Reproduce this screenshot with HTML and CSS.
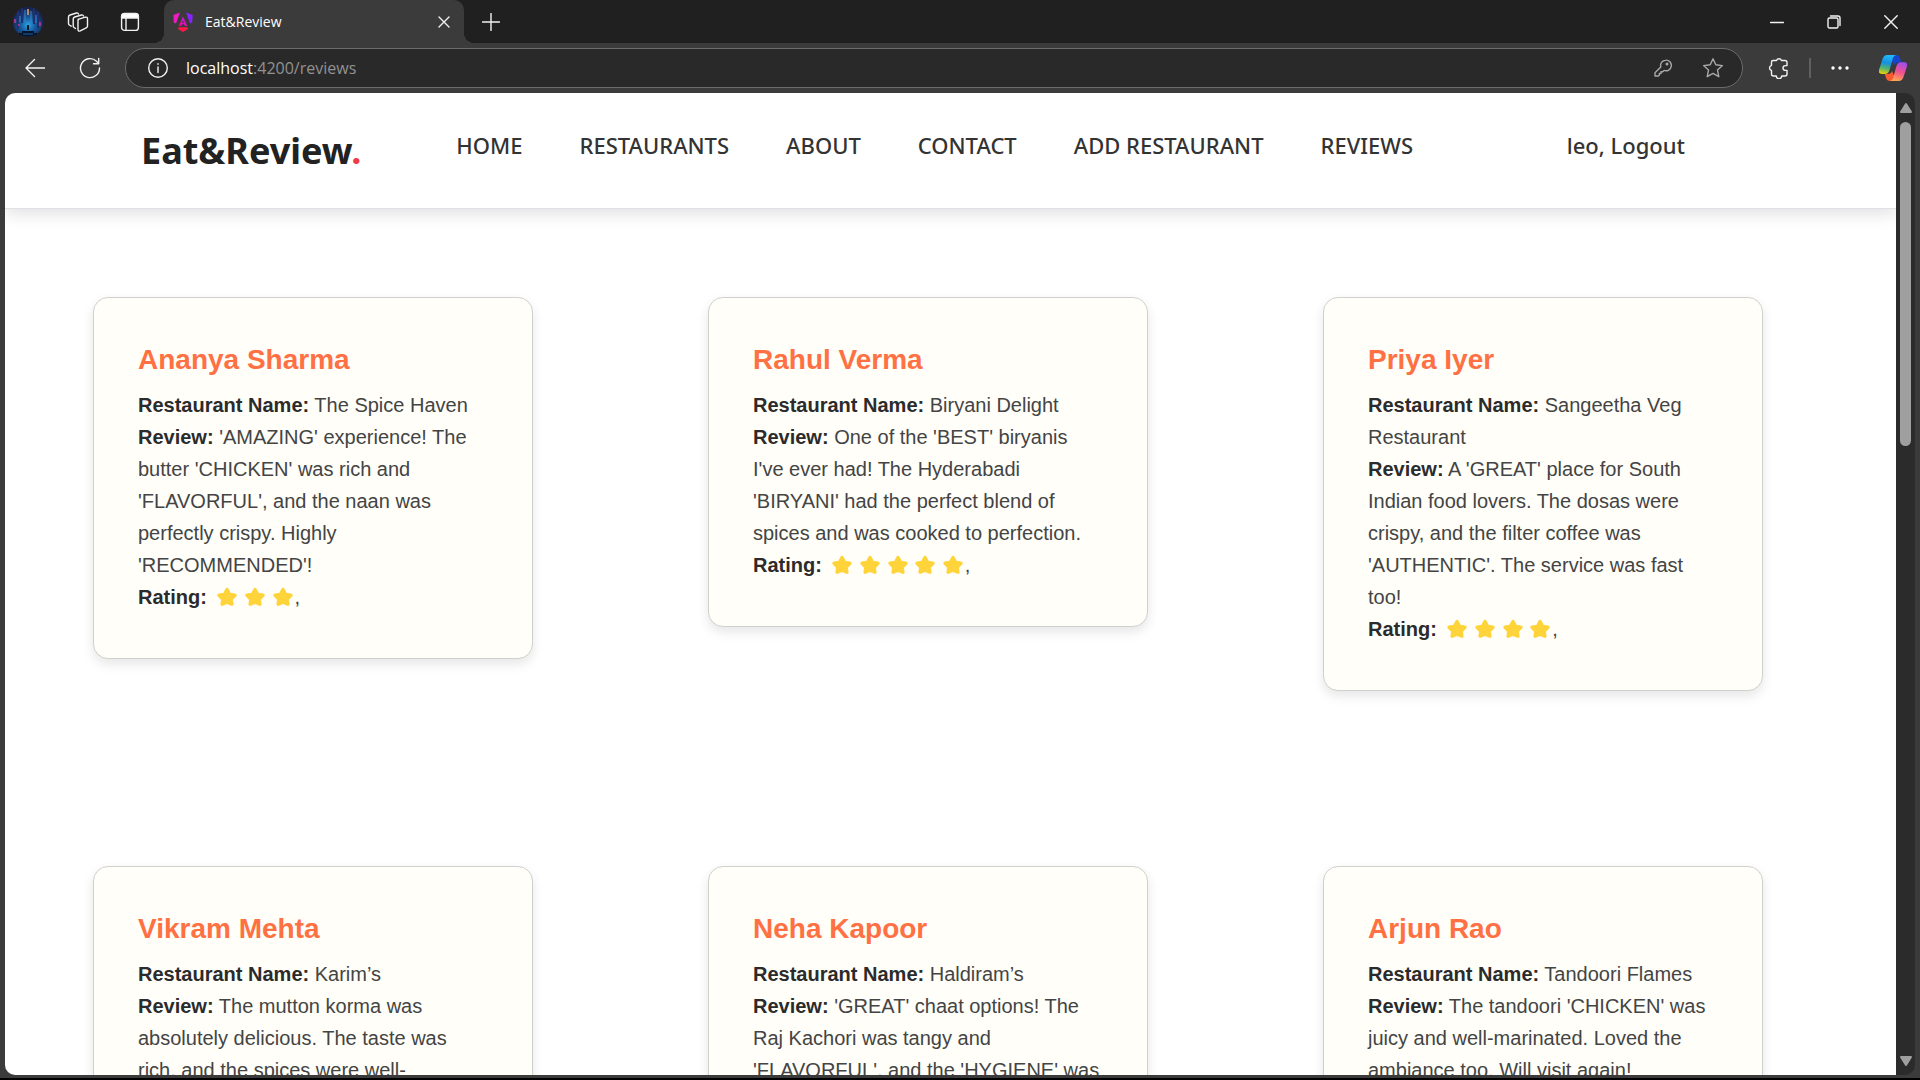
FILE: index.html
```html
<!DOCTYPE html>
<html lang="en">
<head>
<meta charset="utf-8">
<title>Eat&amp;Review</title>
<link rel="stylesheet" href="styles.css">
</head>
<body>
<svg class="defs" width="0" height="0" aria-hidden="true">
  <symbol id="star" viewBox="0 0 22 20"><path d="M11 2.600 13.500 7.400 19 8.300 15.100 12.200 15.900 17.200 11 15.200 6.100 17.200 6.900 12.200 3 8.300 8.500 7.400Z" fill="#ffd43b" stroke="#ffd43b" stroke-width="3.400" stroke-linejoin="round"/></symbol>
</svg>

<div class="tabbar">
  <button class="profile" aria-label="Profile">
    <svg width="30" height="30" viewBox="0 0 30 30">
      <defs>
        <clipPath id="round"><circle cx="15" cy="15" r="15"/></clipPath>
        <radialGradient id="glow" cx=".5" cy=".6" r=".55"><stop offset="0" stop-color="#2ba6e8"/><stop offset=".45" stop-color="#165a9c"/><stop offset="1" stop-color="#182352"/></radialGradient>
      </defs>
      <g clip-path="url(#round)">
        <path fill="url(#glow)" d="M0 0h30v30H0z"/>
        <path d="M5 3v19M9 1v15M21 1v16M25 4v17" stroke="#20306e" stroke-width="2"/>
        <path d="M12 3v12M18 4v12M7 9v6M23 8v8" stroke="#3a86c8"/>
        <path d="M15 2v6" stroke="#b58a6a" stroke-width="2"/>
        <path d="M2 12v4M27 15v4M6 17v2" stroke="#a0378f" stroke-width="2"/>
        <path d="M0 26h9v-2h12v2h9v4H0z" fill="#07122b"/>
        <path d="M14 18h2v5h-2z" fill="#06162f"/>
        <path d="M10 27h10" stroke="#1d63a0"/>
      </g>
    </svg>
  </button>
  <button class="tool" aria-label="Workspaces">
    <svg width="22" height="22" viewBox="0 0 22 22" class="line"><path d="m11 8.300 7.300-2.100q2.200-.5 2.200 1.600V15q0 1.400-1.300 1.900l-6 2.900q-2.200 1-2.200-1.300V9.500q0-.9.8-1.200Z"/><path d="M8.500 17.500 7 16.500q-.8-.5-.8-1.500V8q0-1.500 1.500-2l6.800-2q1.500-.4 2 1"/><path d="M4.200 15.200 2.300 14q-.8-.5-.8-1.500V6q0-1.500 1.500-2l6.500-2q1.500-.4 2 1"/></svg>
  </button>
  <button class="tool" aria-label="Tab actions">
    <svg width="20" height="20" viewBox="0 0 20 20" class="line"><rect x="1.600" y="1.600" width="16.800" height="16.800" rx="3"/><path d="M1.600 6V4.500q0-3 3-3h10.800q3 0 3 3V6Z" fill="#fff"/><path d="M6 6v12"/></svg>
  </button>
  <div class="tab">
    <svg width="20" height="20" viewBox="0 0 20 20">
      <defs><linearGradient id="ng" x1="0" y1="1" x2="1" y2="0"><stop offset="0" stop-color="#f0069b"/><stop offset=".5" stop-color="#e10fc0"/><stop offset="1" stop-color="#a01cff"/></linearGradient></defs>
      <path fill="#f01cc0" d="M7 .5 3 11.500.8 10.500.300 3Z"/><path fill="#8a22ff" d="M13 .5 17 11.500 19.200 10.500 19.700 3Z"/><path fill="url(#ng)" d="m10 4.500 4.200 9.500h-2.400l-.7-1.700H8.900L8.200 14H5.800Zm0 3.800-1 2.500h2Z"/><path fill="#ff1848" d="M5.500 15.200h9l.5 1.800-5 3-5-3Z"/>
    </svg>
    <span class="tab-title">Eat&amp;Review</span>
    <button class="tab-close" aria-label="Close tab"><svg width="12" height="12" viewBox="0 0 12 12" class="line"><path d="m1 1 10 10M11 1 1 11"/></svg></button>
  </div>
  <button class="newtab" aria-label="New tab"><svg width="18" height="18" viewBox="0 0 18 18" class="line"><path d="M9 .5v17M.5 9h17"/></svg></button>
  <div class="window-buttons">
    <button aria-label="Minimize"><svg width="14" height="14" viewBox="0 0 14 14" class="line"><path d="M.5 7.500h13"/></svg></button>
    <button aria-label="Restore"><svg width="14" height="14" viewBox="0 0 14 14" class="line"><rect x="1" y="3" width="10" height="10" rx="1.500"/><path d="M3.500 1h7.500q2 0 2 2v7.500"/></svg></button>
    <button aria-label="Close"><svg width="14" height="14" viewBox="0 0 14 14" class="line"><path d="m.8.8 12.400 12.400M13.200.8.8 13.200"/></svg></button>
  </div>
</div>

<div class="toolbar">
  <button class="nav-button" aria-label="Back"><svg width="20" height="20" viewBox="0 0 20 20" class="line"><path d="M20 10H1M9.500 1.500 1 10l8.500 8.500"/></svg></button>
  <button class="nav-button" aria-label="Refresh"><svg width="22" height="22" viewBox="0 0 22 22" class="line"><path d="M20.500 11A9.500 9.500 0 1 1 17.500 4.200L19.700 6.500M19.700 1.500v5.200h-5.200"/></svg></button>
  <div class="address">
    <button class="info" aria-label="Site information"><svg width="20" height="20" viewBox="0 0 20 20" class="line"><circle cx="10" cy="10" r="9.300"/><path d="M10 9v5.500M10 5.800v.4"/></svg></button>
    <div class="url" role="textbox" aria-label="Address">localhost<span class="url-path">:4200/reviews</span></div>
    <button class="address-button" aria-label="Passwords"><svg width="18" height="18" viewBox="0 0 18 18" class="line"><path d="M11.500 1.200a5.300 5.300 0 1 1-1.400 10.200L8.700 12.800H7v1.700H5.300v1.700l-.9.800H1v-3.300l5.800-5.800A5.300 5.300 0 0 1 11.500 1.200Z"/><circle cx="13" cy="5" r=".8"/></svg></button>
    <button class="address-button" aria-label="Favorite"><svg width="22" height="22" viewBox="0 0 22 22" class="line"><path d="m11 1.800 2.800 6 6.600.8-4.900 4.500 1.300 6.600L11 16.400l-5.800 3.300 1.300-6.600L1.600 8.600l6.600-.8Z"/></svg></button>
  </div>
  <button class="extra" aria-label="Extensions"><svg width="22" height="22" viewBox="0 0 22 22" class="line"><path d="M5 3.500h3.500a2.700 2.700 0 0 1 5 0H17q2 0 2 2V8.600h-1.600a2.400 2.400 0 0 0 0 4.800H19V17q0 2-2 2h-3.300a2.700 2.700 0 0 1-5.400 0H5.500q-2 0-2-2v-3.500a2.700 2.700 0 0 1 0-5.200V5q0-1.500 1.500-1.500Z"/></svg></button>
  <span class="divider"></span>
  <button class="extra" aria-label="Settings"><svg width="18" height="6" viewBox="0 0 18 6" fill="#fff"><circle cx="2" cy="3" r="1.700"/><circle cx="9" cy="3" r="1.700"/><circle cx="16" cy="3" r="1.700"/></svg></button>
  <button class="copilot" aria-label="Copilot">
    <svg width="28" height="26" viewBox="0 0 28 26">
      <defs>
        <linearGradient id="ca" x1=".4" y1="0" x2=".2" y2="1"><stop offset="0" stop-color="#20b8f5"/><stop offset=".4" stop-color="#1590e0"/><stop offset=".7" stop-color="#59b56c"/><stop offset="1" stop-color="#f5d000"/></linearGradient>
        <linearGradient id="cb" x1=".7" y1="0" x2=".4" y2="1"><stop offset="0" stop-color="#a04cf0"/><stop offset=".5" stop-color="#f05090"/><stop offset="1" stop-color="#ffa850"/></linearGradient>
      </defs>
      <path fill="#1545cf" d="M13 0h4q3 0 4 3l1.200 4.500H19q-3 0-4 3L12 3Z"/>
      <path fill="#fa5a30" d="M15 26h-4q-3 0-4-3l-1.200-4H9q3 0 4-3l3 7Z"/>
      <path fill="url(#ca)" d="M8 0h10q-3 0-4 3l-3.500 12q-1 4-4.500 4H3q-4 0-3-4L3.500 4Q5 0 8 0Z"/>
      <path fill="url(#cb)" d="M20 26H10q3 0 4-3l3.500-12q1-3.800 4.500-3.800h3q4 0 3 4L24.500 22Q23 26 20 26Z"/>
    </svg>
  </button>
</div>

<div class="viewport">
  <div class="page">
    <header class="site-header">
      <a class="logo" href="#">Eat&amp;Review<span class="logo-dot">.</span></a>
      <nav class="site-nav">
        <a href="#">HOME</a>
        <a href="#">RESTAURANTS</a>
        <a href="#">ABOUT</a>
        <a href="#">CONTACT</a>
        <a href="#">ADD RESTAURANT</a>
        <a href="#">REVIEWS</a>
      </nav>
      <a class="account" href="#">leo, Logout</a>
    </header>
    <main class="reviews">
      <article class="card">
        <h2>Ananya Sharma</h2>
        <p><b>Restaurant Name:</b> The Spice Haven</p>
        <p><b>Review:</b> 'AMAZING' experience! The butter 'CHICKEN' was rich and 'FLAVORFUL', and the naan was perfectly crispy. Highly 'RECOMMENDED'!</p>
        <p><b>Rating:</b> <span class="stars"><svg><use href="#star"/></svg> <svg><use href="#star"/></svg> <svg><use href="#star"/></svg></span>,</p>
      </article>
      <article class="card">
        <h2>Rahul Verma</h2>
        <p><b>Restaurant Name:</b> Biryani Delight</p>
        <p><b>Review:</b> One of the 'BEST' biryanis I've ever had! The Hyderabadi 'BIRYANI' had the perfect blend of spices and was cooked to perfection.</p>
        <p><b>Rating:</b> <span class="stars"><svg><use href="#star"/></svg> <svg><use href="#star"/></svg> <svg><use href="#star"/></svg> <svg><use href="#star"/></svg> <svg><use href="#star"/></svg></span>,</p>
      </article>
      <article class="card">
        <h2>Priya Iyer</h2>
        <p><b>Restaurant Name:</b> Sangeetha Veg Restaurant</p>
        <p><b>Review:</b> A 'GREAT' place for South Indian food lovers. The dosas were crispy, and the filter coffee was 'AUTHENTIC'. The service was fast too!</p>
        <p><b>Rating:</b> <span class="stars"><svg><use href="#star"/></svg> <svg><use href="#star"/></svg> <svg><use href="#star"/></svg> <svg><use href="#star"/></svg></span>,</p>
      </article>
      <article class="card">
        <h2>Vikram Mehta</h2>
        <p><b>Restaurant Name:</b> Karim’s</p>
        <p><b>Review:</b> The mutton korma was absolutely delicious. The taste was rich, and the spices were well-</p>
      </article>
      <article class="card">
        <h2>Neha Kapoor</h2>
        <p><b>Restaurant Name:</b> Haldiram’s</p>
        <p><b>Review:</b> 'GREAT' chaat options! The Raj Kachori was tangy and 'FLAVORFUL', and the 'HYGIENE' was</p>
      </article>
      <article class="card">
        <h2>Arjun Rao</h2>
        <p><b>Restaurant Name:</b> Tandoori Flames</p>
        <p><b>Review:</b> The tandoori 'CHICKEN' was juicy and well-marinated. Loved the ambiance too. Will visit again!</p>
      </article>
    </main>
  </div>
  <div class="scrollbar">
    <svg width="14" height="12" viewBox="0 0 14 12"><path d="M7 2 12 10H2Z" fill="#9f9f9f" stroke="#9f9f9f" stroke-width="2" stroke-linejoin="round"/></svg>
    <div class="track"><div class="thumb"></div></div>
    <svg width="14" height="12" viewBox="0 0 14 12"><path d="M7 10 12 2H2Z" fill="#9f9f9f" stroke="#9f9f9f" stroke-width="2" stroke-linejoin="round"/></svg>
  </div>
</div>
</body>
</html>
```
FILE: styles.css
```css
* { box-sizing: border-box; }

body {
  margin: 0;
  height: 100vh;
  display: flex;
  flex-direction: column;
  overflow: hidden;
  background: #3b3b3b;
  border-bottom: 2px solid #000;
  font-family: "Open Sans", "Noto Sans", sans-serif;
}

button {
  display: flex;
  align-items: center;
  justify-content: center;
  padding: 0;
  border: 0;
  background: none;
}

.defs { position: absolute; }
.line { fill: none; stroke: #f2f2f2; stroke-width: 1.4; stroke-linejoin: round; stroke-linecap: round; }

/* Tab strip */
.tabbar {
  flex: none;
  display: flex;
  height: 43px;
  padding-left: 13px;
  background: #202020;
}
.profile { width: 30px; margin-right: 9px; }
.tool { width: 52px; }
.tab {
  position: relative;
  display: flex;
  align-items: center;
  width: 300px;
  margin-left: 8px;
  padding: 0 8px 0 9px;
  border-radius: 10px 10px 0 0;
  background: #3b3b3b;
}
.tab::before,
.tab::after {
  content: "";
  position: absolute;
  bottom: 0;
  width: 10px;
  height: 10px;
}
.tab::before { right: 100%; background: radial-gradient(circle at 0 0, #202020 10px, #3b3b3b 10px); }
.tab::after { left: 100%; background: radial-gradient(circle at 100% 0, #202020 10px, #3b3b3b 10px); }
.tab-title { flex: 1; margin-left: 12px; font-size: 14px; line-height: 20px; color: #fff; }
.tab-close { width: 24px; height: 24px; }
.newtab { width: 54px; }
.window-buttons { display: flex; margin: 0 1px 0 auto; }
.window-buttons button { width: 57px; }

/* Address row */
.toolbar {
  flex: none;
  display: flex;
  align-items: center;
  height: 50px;
  padding: 0 1px 0 7px;
}
.nav-button { width: 55px; height: 40px; }
.address {
  flex: 1;
  display: flex;
  align-items: center;
  height: 40px;
  margin: 0 9px 0 8px;
  padding: 0 4px 0 22px;
  border: 1px solid #6b6b6b;
  border-radius: 20px;
  background: #292929;
}
.info { margin-right: 18px; }
.url { flex: 1; font-size: 16px; line-height: 24px; color: #fff; }
.url-path { color: #929292; }
.address-button { width: 50px; height: 38px; }
.address-button .line { stroke: #a8a8a8; }
.extra { width: 54px; height: 40px; }
.divider { width: 2px; height: 20px; margin: 0 2px 0 3px; background: #606060; }
.copilot { width: 52px; height: 40px; }

/* Page frame */
.viewport {
  flex: 1;
  min-height: 0;
  display: flex;
  margin: 0 5px 3px;
  border-radius: 10px;
  overflow: hidden;
}
.page { flex: 1; background: #fff; overflow: hidden; }
.scrollbar {
  display: flex;
  flex-direction: column;
  align-items: center;
  width: 19px;
  padding: 9px 0 8px;
  background: #2b2b2b;
}
.track { flex: 1; width: 11px; padding: 8px 0; }
.thumb { height: 35%; border-radius: 6px; background: #9f9f9f; }

/* Site header */
.site-header {
  display: flex;
  align-items: flex-start;
  height: 116px;
  padding: 34px 211px 0 136px;
  border-bottom: 1px solid #dee2e6;
  box-shadow: 0 5px 15px rgba(0, 0, 0, 0.12);
  font-family: "Noto Sans", "Open Sans", sans-serif;
}
.site-header a { color: #333; text-decoration: none; white-space: nowrap; }
.site-header .logo {
  font-size: 36px;
  line-height: 48px;
  font-weight: 700;
  color: #222;
}
.logo .logo-dot { color: #f03a47; }
.site-nav { display: flex; gap: 57px; margin-left: 95px; }
.site-nav a,
.account { font-size: 22px; line-height: 36px; font-weight: 500; }
.account { margin-left: auto; }

/* Review cards */
.reviews {
  display: grid;
  grid-template-columns: repeat(3, minmax(0, 1fr));
  align-items: start;
  gap: 175px;
  padding: 88px 133px 88px 88px;
  font-family: "Liberation Sans", Arial, sans-serif;
}
.card {
  padding: 45px 44px;
  border: 1px solid #d0d0cc;
  border-radius: 15px;
  background: #fffef9;
  box-shadow: 0 5px 12px rgba(0, 0, 0, 0.1);
}
.card h2 { margin: 0 0 12px; font-size: 28px; line-height: 34px; color: #ff7043; }
.card p { margin: 0; font-size: 20px; line-height: 32px; color: #444; }
.card b { color: #2b2b2b; }
.stars { margin: 0 1px 0 4px; }
.stars svg { width: 22px; height: 20px; vertical-align: -3px; }
```
